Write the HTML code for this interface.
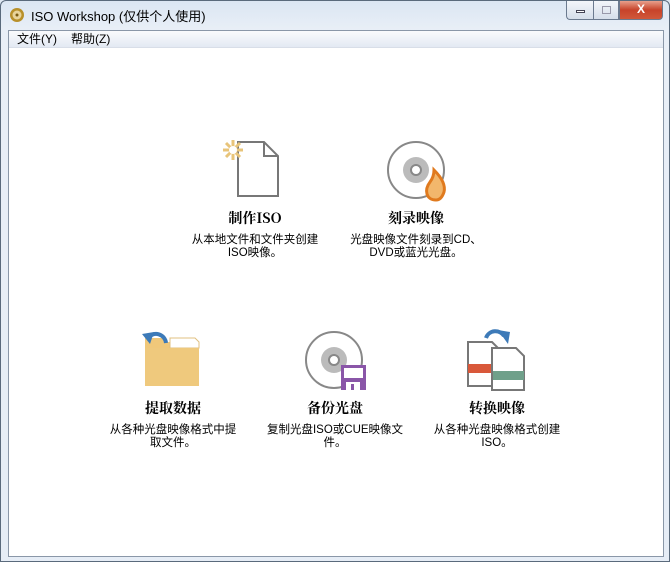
<!DOCTYPE html>
<html><head><meta charset="utf-8"><style>
*{margin:0;padding:0;box-sizing:border-box}
body{width:670px;height:562px;overflow:hidden;background:#dfe8f3;font-family:"Liberation Sans","Noto Sans CJK SC",sans-serif;position:relative}
.frame{position:absolute;left:0;top:0;width:670px;height:562px;border:1px solid #5a6a7c;border-radius:6px 6px 0 0;background:linear-gradient(#dbe6f3,#e9eff7 30px,#e6edf6)}
.title{position:absolute;left:30px;top:5px;font-size:13px;color:#000}
.btns{position:absolute;right:6px;top:0;display:flex}
.b{height:19px;border:1px solid #6b7a8f;border-top:none;background:linear-gradient(#f3f6fa,#d5deea)}
.client{position:absolute;left:7px;top:29px;width:656px;height:527px;background:#fff;border:1px solid #8a97a8}
.menu{height:17px;background:linear-gradient(#fafbfd,#e3e9f3);border-bottom:1px solid #d8dee8;font-size:12px;padding-left:8px;line-height:17px}
.menu span{margin-right:14px}
.t{position:absolute;font-weight:bold;font-size:14px;text-align:center;width:200px;font-family:"Noto Serif CJK SC","Liberation Serif",serif}
.d{position:absolute;font-size:11.5px;text-align:center;width:200px;line-height:13px;color:#000}
svg{position:absolute}
</style></head><body>
<div class="frame">
<svg style="left:8px;top:6px" width="16" height="16" viewBox="0 0 16 16"><circle cx="8" cy="8" r="7" fill="#b8902a"/><circle cx="8" cy="8" r="4.5" fill="#e8d39a"/><circle cx="8" cy="8" r="1.5" fill="#7a5a10"/></svg>
<div class="title">ISO Workshop (仅供个人使用)</div>
<div class="btns">
<div class="b" style="width:27px;border-radius:0 0 0 4px;border-right:none"><div style="width:9px;height:3px;border:1px solid #445;margin:9px auto 0;background:#fff"></div></div>
<div class="b" style="width:26px"><div style="width:9px;height:8px;border:1px solid #99a;margin:5px auto 0"></div></div>
<div class="b" style="width:44px;background:linear-gradient(#e8a08c,#c7432a 50%,#d0583a);border-radius:0 0 4px 0;color:#fff;font-weight:bold;text-align:center;font-size:12px;line-height:17px">X</div>
</div>
<div class="client">
<div class="menu"><span>文件(Y)</span><span>帮助(Z)</span></div>
</div>
</div>
<!-- create ISO -->
<svg style="left:220px;top:138px" width="62" height="62" viewBox="0 0 62 62"><path d="M18 4H44L58 18V58H18Z" fill="#fff" stroke="#777" stroke-width="2"/><path d="M44 4V18H58" fill="none" stroke="#777" stroke-width="2"/><g stroke="#e8c47a" stroke-width="3"><line x1="13" y1="2" x2="13" y2="22"/><line x1="3" y1="12" x2="23" y2="12"/><line x1="6" y1="5" x2="20" y2="19"/><line x1="20" y1="5" x2="6" y2="19"/></g><circle cx="13" cy="12" r="4" fill="#fff"/></svg>
<div class="t" style="left:155px;top:208px">制作ISO</div>
<div class="d" style="left:155px;top:234px">从本地文件和文件夹创建<br>ISO映像。</div>
<!-- burn -->
<svg style="left:386px;top:140px" width="64" height="64" viewBox="0 0 64 64"><circle cx="30" cy="30" r="28" fill="#fff" stroke="#888" stroke-width="2"/><circle cx="30" cy="30" r="13" fill="#bbb"/><circle cx="30" cy="30" r="5" fill="#fff" stroke="#888" stroke-width="2"/><path d="M50 60C40 60 38 50 44 42C47 38 48 34 48 30C54 36 60 44 58 52C56 58 53 60 50 60Z" fill="#f2b76c" stroke="#e07a1e" stroke-width="3"/></svg>
<div class="t" style="left:316px;top:208px">刻录映像</div>
<div class="d" style="left:316px;top:234px">光盘映像文件刻录到CD、<br>DVD或蓝光光盘。</div>
<!-- extract -->
<svg style="left:140px;top:328px" width="62" height="62" viewBox="0 0 62 62"><path d="M5 10H24L28 14H59V58H5Z" fill="#f0c87a"/><path d="M30 10H55L59 14V20H30Z" fill="#fff" stroke="#e0c080"/><path d="M5 20H59V58H5Z" fill="#efc97d"/><path d="M26 15A10 10 0 0 0 8 10" fill="none" stroke="#3d7ab8" stroke-width="4"/><path d="M2 6L10 16L14 4Z" fill="#3d7ab8"/></svg>
<div class="t" style="left:73px;top:398px">提取数据</div>
<div class="d" style="left:73px;top:424px">从各种光盘映像格式中提<br>取文件。</div>
<!-- backup -->
<svg style="left:304px;top:330px" width="64" height="62" viewBox="0 0 64 62"><circle cx="30" cy="30" r="28" fill="#fff" stroke="#888" stroke-width="2"/><circle cx="30" cy="30" r="13" fill="#bbb"/><circle cx="30" cy="30" r="5" fill="#fff" stroke="#888" stroke-width="2"/><rect x="37" y="35" width="25" height="25" fill="#8a56a8"/><rect x="40" y="38" width="19" height="10" fill="#fff"/><rect x="42" y="52" width="14" height="8" fill="#fff"/><rect x="47" y="54" width="3" height="6" fill="#8a56a8"/></svg>
<div class="t" style="left:235px;top:398px">备份光盘</div>
<div class="d" style="left:235px;top:424px">复制光盘ISO或CUE映像文<br>件。</div>
<!-- convert -->
<svg style="left:466px;top:328px" width="62" height="64" viewBox="0 0 62 64"><path d="M2 14H26L34 22V58H2Z" fill="#fff" stroke="#777" stroke-width="2"/><rect x="2" y="36" width="24" height="9" fill="#d9583a"/><path d="M26 20H50L58 28V62H26Z" fill="#fff" stroke="#777" stroke-width="2"/><rect x="27" y="43" width="31" height="9" fill="#6fa08a"/><path d="M20 10A10 10 0 0 1 38 8" fill="none" stroke="#3d7ab8" stroke-width="4"/><path d="M32 2L42 16L44 4Z" fill="#3d7ab8"/></svg>
<div class="t" style="left:397px;top:398px">转换映像</div>
<div class="d" style="left:397px;top:424px">从各种光盘映像格式创建<br>ISO。</div>
</body></html>
